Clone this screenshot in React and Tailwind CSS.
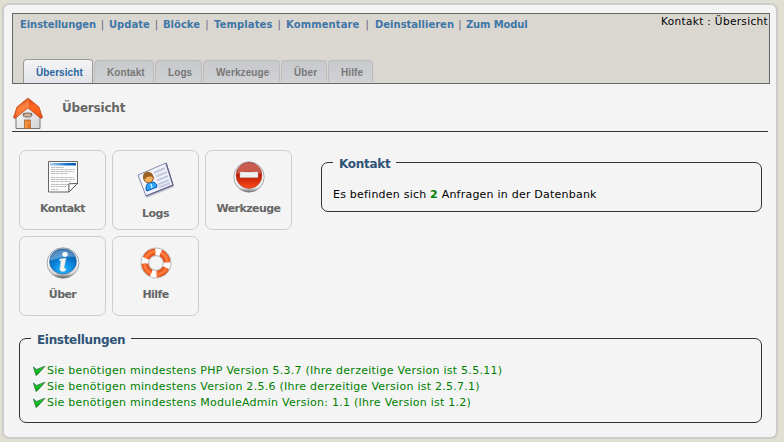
import React from 'react';

const links = [
  ['Einstellungen', 'w-[89px]', 'tracking-[-0.08px]'],
  ['Update', 'w-[54px]', ''],
  ['Blöcke', 'w-[51px]', ''],
  ['Templates', 'w-[72px]', 'tracking-[0.1px]'],
  ['Kommentare', 'w-[89px]', 'tracking-[0.1px]'],
  ['Deinstallieren', 'w-[91px]', ''],
  ['Zum Modul', 'w-[64px]', 'tracking-[-0.15px]'],
];

const tabs = [
  ['Kontakt', 'w-[60px]'],
  ['Logs', 'w-[47px]'],
  ['Werkzeuge', 'w-[77px]'],
  ['Über', 'w-[46px]'],
  ['Hilfe', 'w-[45px]'],
];

const checks = [
  'Sie benötigen mindestens PHP Version 5.3.7 (Ihre derzeitige Version ist 5.5.11)',
  'Sie benötigen mindestens Version 2.5.6 (Ihre derzeitige Version ist 2.5.7.1)',
  'Sie benötigen mindestens ModuleAdmin Version: 1.1 (Ihre Version ist 1.2)',
];

function HomeIcon() {
  return (
    <svg width="32" height="34" viewBox="0 0 32 34">
      <defs>
        <linearGradient id="roof" x1="0" y1="0" x2="0" y2="1">
          <stop offset="0" stopColor="#dd4312" />
          <stop offset=".45" stopColor="#ff6a20" />
          <stop offset="1" stopColor="#ef4a0c" />
        </linearGradient>
        <linearGradient id="wall" x1="0" y1="0" x2="1" y2="1">
          <stop offset="0" stopColor="#fff" />
          <stop offset="1" stopColor="#d2d2d2" />
        </linearGradient>
      </defs>
      <path d="M4 17 16 7 28 17V31.500H4Z" fill="url(#wall)" stroke="#777" />
      <path d="M16 1 27 10 30.500 20.500 29 21.500 16 11 3 21.500 1.500 20.500 5 10Z" fill="url(#roof)" stroke="#b9512c" strokeWidth=".8" />
      <path d="M16 2v8L5 18.500" fill="none" stroke="#ffa06a" strokeWidth=".8" />
      <path d="M16 3 6 11 3 19 16 9Z" fill="#ffb183" opacity=".35" />
      <ellipse cx="15.500" cy="18" rx="5" ry="2.700" fill="#9a8d83" />
      <path d="M12 18h7" stroke="#e7c3a2" strokeWidth="1.500" />
      <path d="M11 17h2M18 17h2" stroke="#594d49" />
      <rect x="12.500" y="23" width="6" height="8.500" fill="#e87a28" stroke="#a5683f" strokeWidth=".8" />
      <path d="M14 24v7M17 25v2" stroke="#ffb35c" />
    </svg>
  );
}

function DocIcon() {
  return (
    <svg width="32" height="32" viewBox="0 0 32 32">
      <defs><linearGradient id="head"><stop stopColor="#a8d0ef" /><stop offset=".7" stopColor="#0f6cc8" /><stop offset="1" stopColor="#0759b8" /></linearGradient></defs>
      <path d="M1.500.5h29v22l-8.500 8.500h-20.500Z" fill="#fbfbfb" stroke="#666" />
      <path d="M3 2h26v2.500H3Z" fill="url(#head)" />
      <path d="M4 6.500h13M4 8.500h24M4 10.500h23M4 12.500h17M4 16.500h23M4 18.500h24M4 20.500h20M4 23.500h17M4 25.500h15M4 28.500h7" stroke="#c0c0c0" strokeDasharray="4 .4" />
      <path d="M22 31 21.800 22.800 30.500 22.500Z" fill="#fff" stroke="#555" />
    </svg>
  );
}

function CardIcon() {
  return (
    <svg width="40" height="36" viewBox="0 0 40 36">
      <path d="M2 14 31 2 38 25 11 36Z" fill="#8585a0" opacity=".4" />
      <path d="M2 13 30 1 37 23 10 34Z" fill="#f0f2fa" stroke="#8d8db0" />
      <path d="M30 1 37 23 10 34" fill="none" stroke="#636386" strokeWidth="1.300" />
      <path d="m18 11 11-5M20 14.500 31 10M21 18.500 32 14M22 22.500 33 18M23 25.500 34 21" stroke="#c4c8df" strokeWidth="2" />
      <path d="M10 28c0-6 2-8 6-8 3 0 5 2 5 5l-10 4Z" fill="#2ca3fa" stroke="#0757ae" />
      <circle cx="12.500" cy="16" r="4.800" fill="#f6b15d" stroke="#8e4d1c" />
      <path d="M7.500 17c-3-9 10-10 10-1-2-2-7-2-8 1Z" fill="#9a6125" />
      <path d="m15 22 1 4" stroke="#c7ecff" strokeWidth="1.500" />
    </svg>
  );
}

function StopIcon() {
  return (
    <svg width="32" height="32" viewBox="0 0 32 32">
      <defs>
        <linearGradient id="rim" x1="0" y1="0" x2="0" y2="1"><stop stopColor="#d5d5d5" /><stop offset=".45" stopColor="#fff" /><stop offset=".86" stopColor="#e5e5e5" /><stop offset="1" stopColor="#666" /></linearGradient>
        <linearGradient id="red" x1="0" y1="0" x2="0" y2="1"><stop stopColor="#b52a1c" /><stop offset=".5" stopColor="#bd1c05" /><stop offset="1" stopColor="#ff4a19" /></linearGradient>
      </defs>
      <circle cx="16" cy="16" r="15.200" fill="url(#rim)" stroke="#888" strokeWidth=".7" />
      <circle cx="16" cy="14.500" r="12.900" fill="url(#red)" stroke="#a63022" strokeWidth=".6" />
      <path d="M4 13a12 11 0 0 1 24 0c-8-4-16-4-24 0Z" fill="#fff" opacity=".25" />
      <rect x="7" y="11" width="18" height="5.500" fill="#f0f0f0" stroke="#bbb" strokeWidth=".5" />
    </svg>
  );
}

function InfoIcon() {
  return (
    <svg width="34" height="32" viewBox="0 0 34 32">
      <defs>
        <linearGradient id="ring" x1="0" y1="0" x2="0" y2="1"><stop stopColor="#c8d1df" /><stop offset=".45" stopColor="#fff" /><stop offset=".85" stopColor="#d5d5d5" /><stop offset="1" stopColor="#555" /></linearGradient>
        <radialGradient id="blue" cx=".5" cy=".85" r=".8"><stop stopColor="#22b9ff" /><stop offset=".55" stopColor="#087fd7" /><stop offset="1" stopColor="#075198" /></radialGradient>
      </defs>
      <ellipse cx="17" cy="16" rx="16" ry="15.200" fill="url(#ring)" stroke="#808894" strokeWidth=".7" />
      <ellipse cx="17" cy="14.500" rx="13.500" ry="12.500" fill="url(#blue)" stroke="#285d92" strokeWidth=".6" />
      <path d="M4 14a13 12 0 0 1 25-4c-9-1-16 0-25 4Z" fill="#fff" opacity=".32" />
      <ellipse cx="19" cy="7.400" rx="2.700" ry="2.300" fill="#fff" />
      <path d="m14 12 6-1-2 10 2 1-1 2c-3 1-6 0-5-3l1-7-2-1Z" fill="#f4f4ed" stroke="#d3ddd9" strokeWidth=".4" />
    </svg>
  );
}

function BuoyIcon() {
  return (
    <svg width="32" height="32" viewBox="0 0 32 32">
      <circle cx="16" cy="16" r="15" fill="none" stroke="#999" strokeWidth=".7" strokeDasharray="3 1" />
      <circle cx="16" cy="16" r="11" fill="none" stroke="#aaa" strokeWidth="8" />
      <circle cx="16" cy="16" r="11" fill="none" stroke="#fff" strokeWidth="7" />
      <circle cx="16" cy="16" r="11" fill="none" stroke="#e4561c" strokeWidth="7" pathLength="100" strokeDasharray="17 8" strokeDashoffset="-7" />
      <circle cx="16" cy="16" r="11.500" fill="none" stroke="#ff7a3c" strokeWidth="3" pathLength="100" strokeDasharray="17 8" strokeDashoffset="-7" />
      <circle cx="16" cy="16" r="7.300" fill="#f4f4f4" stroke="#999" strokeWidth=".6" />
    </svg>
  );
}

function Check() {
  return (
    <svg className="mr-px ml-[2px] shrink-0" width="13" height="12" viewBox="0 0 13 12">
      <path d="M.5 2 3.500 4.500 12 1.200 5 9 3 10.500Z" fill="#0fae1e" stroke="#2f7a40" strokeWidth=".8" />
      <path d="m2 4 1.800 2.500 4.500-3" fill="none" stroke="#22d82c" />
    </svg>
  );
}

function Tile({ icon, label, top }) {
  return (
    <div className={`flex h-20 w-[87px] flex-col items-center rounded-[7px] border border-[#ccc] ${top}`}>
      {icon}
      <span className="mt-[9px] text-[11px] leading-[14px] font-bold tracking-[-0.55px] whitespace-nowrap text-[#666]">{label}</span>
    </div>
  );
}

export default function App() {
  return (
    <div className="h-[442px] w-[784px] overflow-hidden bg-[#e1ded2] pt-[3px] pl-[2px] font-['DejaVu_Sans',Verdana,sans-serif] text-black">
      <main className="h-[436px] w-[776px] rounded-[7px] border-2 border-[#ccc] bg-[#f4f4f4] pt-2 pl-2">
        <header className="flex h-[71px] w-[758px] flex-col justify-between border border-[#666] bg-[#dad7d1]">
          <div className="flex justify-between pr-px pl-[7px]">
            <nav className="flex pt-1 text-[10px] leading-[14px] font-bold text-[#3f76a6]">
              {links.map(([label, width, tracking], i) => (
                <div key={label} className={`flex shrink-0 whitespace-nowrap ${width}`}>
                  <span className={tracking}>{label}</span>
                  {i < 6 && <span className="flex-1 text-center font-normal text-[#6b5a7c]">|</span>}
                </div>
              ))}
            </nav>
            <span className="text-[10.500px] leading-[14px] tracking-[0.34px] whitespace-nowrap">Kontakt : Übersicht</span>
          </div>
          <div className="flex h-6 items-end gap-px pl-[10px] font-['Liberation_Sans',Arial,sans-serif] text-[10px] font-bold tracking-[0.08px] text-[#777]">
            <div className="h-6 w-[70px] rounded-t-[4px] border border-b-0 border-[#999] bg-linear-to-b from-[#f5f5f5] to-[#e1e3e8] pt-[6px] pl-3 leading-[14px] text-[#2864a0]">Übersicht</div>
            <div className="flex h-[23px]">
              {tabs.map(([label, width]) => (
                <div key={label} className={`mr-px h-[22px] rounded-t-[4px] border border-b-0 border-[#bbb] bg-linear-to-b from-[#c8c9cc] to-[#d0d1d5] pt-[5px] pl-3 leading-[14px] ${width}`}>{label}</div>
              ))}
            </div>
          </div>
        </header>
        <section className="flex h-12 w-[756px] items-end border-b border-[#333]">
          <HomeIcon />
          <h1 className="mb-4 ml-[18px] text-[12px] leading-[14px] font-bold tracking-[-0.2px] text-[#666]">Übersicht</h1>
        </section>
        <div className="flex pt-[18px] pl-[7px]">
          <div className="grid w-[273px] grid-cols-3 gap-[6px]">
            <Tile icon={<DocIcon />} label="Kontakt" top="pt-[10px]" />
            <Tile icon={<CardIcon />} label="Logs" top="pt-[11px]" />
            <Tile icon={<StopIcon />} label="Werkzeuge" top="pt-[10px]" />
            <Tile icon={<InfoIcon />} label="Über" top="pt-[10px]" />
            <Tile icon={<BuoyIcon />} label="Hilfe" top="pt-[10px]" />
          </div>
          <fieldset className="mt-[4px] ml-[29px] h-[58px] w-[441px] rounded-[7px] border border-[#333] pl-[11px]">
            <legend className="px-[6px] pt-[3px] text-[12px] leading-[14px] font-bold tracking-[-0.3px] text-[#2f5376]">Kontakt</legend>
            <p className="mt-[16px] text-[11px] leading-[16px] tracking-[0.22px] whitespace-nowrap">Es befinden sich <b className="text-[green]">2</b> Anfragen in der Datenbank</p>
          </fieldset>
        </div>
        <fieldset className="mt-[14px] ml-[7px] h-[93px] w-[743px] rounded-[7px] border border-[#333] pl-[11px]">
          <legend className="px-[6px] pt-[3px] text-[12px] leading-[14px] font-bold tracking-[-0.33px] text-[#2f5376]">Einstellungen</legend>
          <div className="pt-[16px] text-[11px] leading-[16px] tracking-[0.26px] text-[green]">
            {checks.map((line) => (
              <div key={line} className="flex h-4 items-center whitespace-nowrap"><Check />{line}</div>
            ))}
          </div>
        </fieldset>
      </main>
    </div>
  );
}
